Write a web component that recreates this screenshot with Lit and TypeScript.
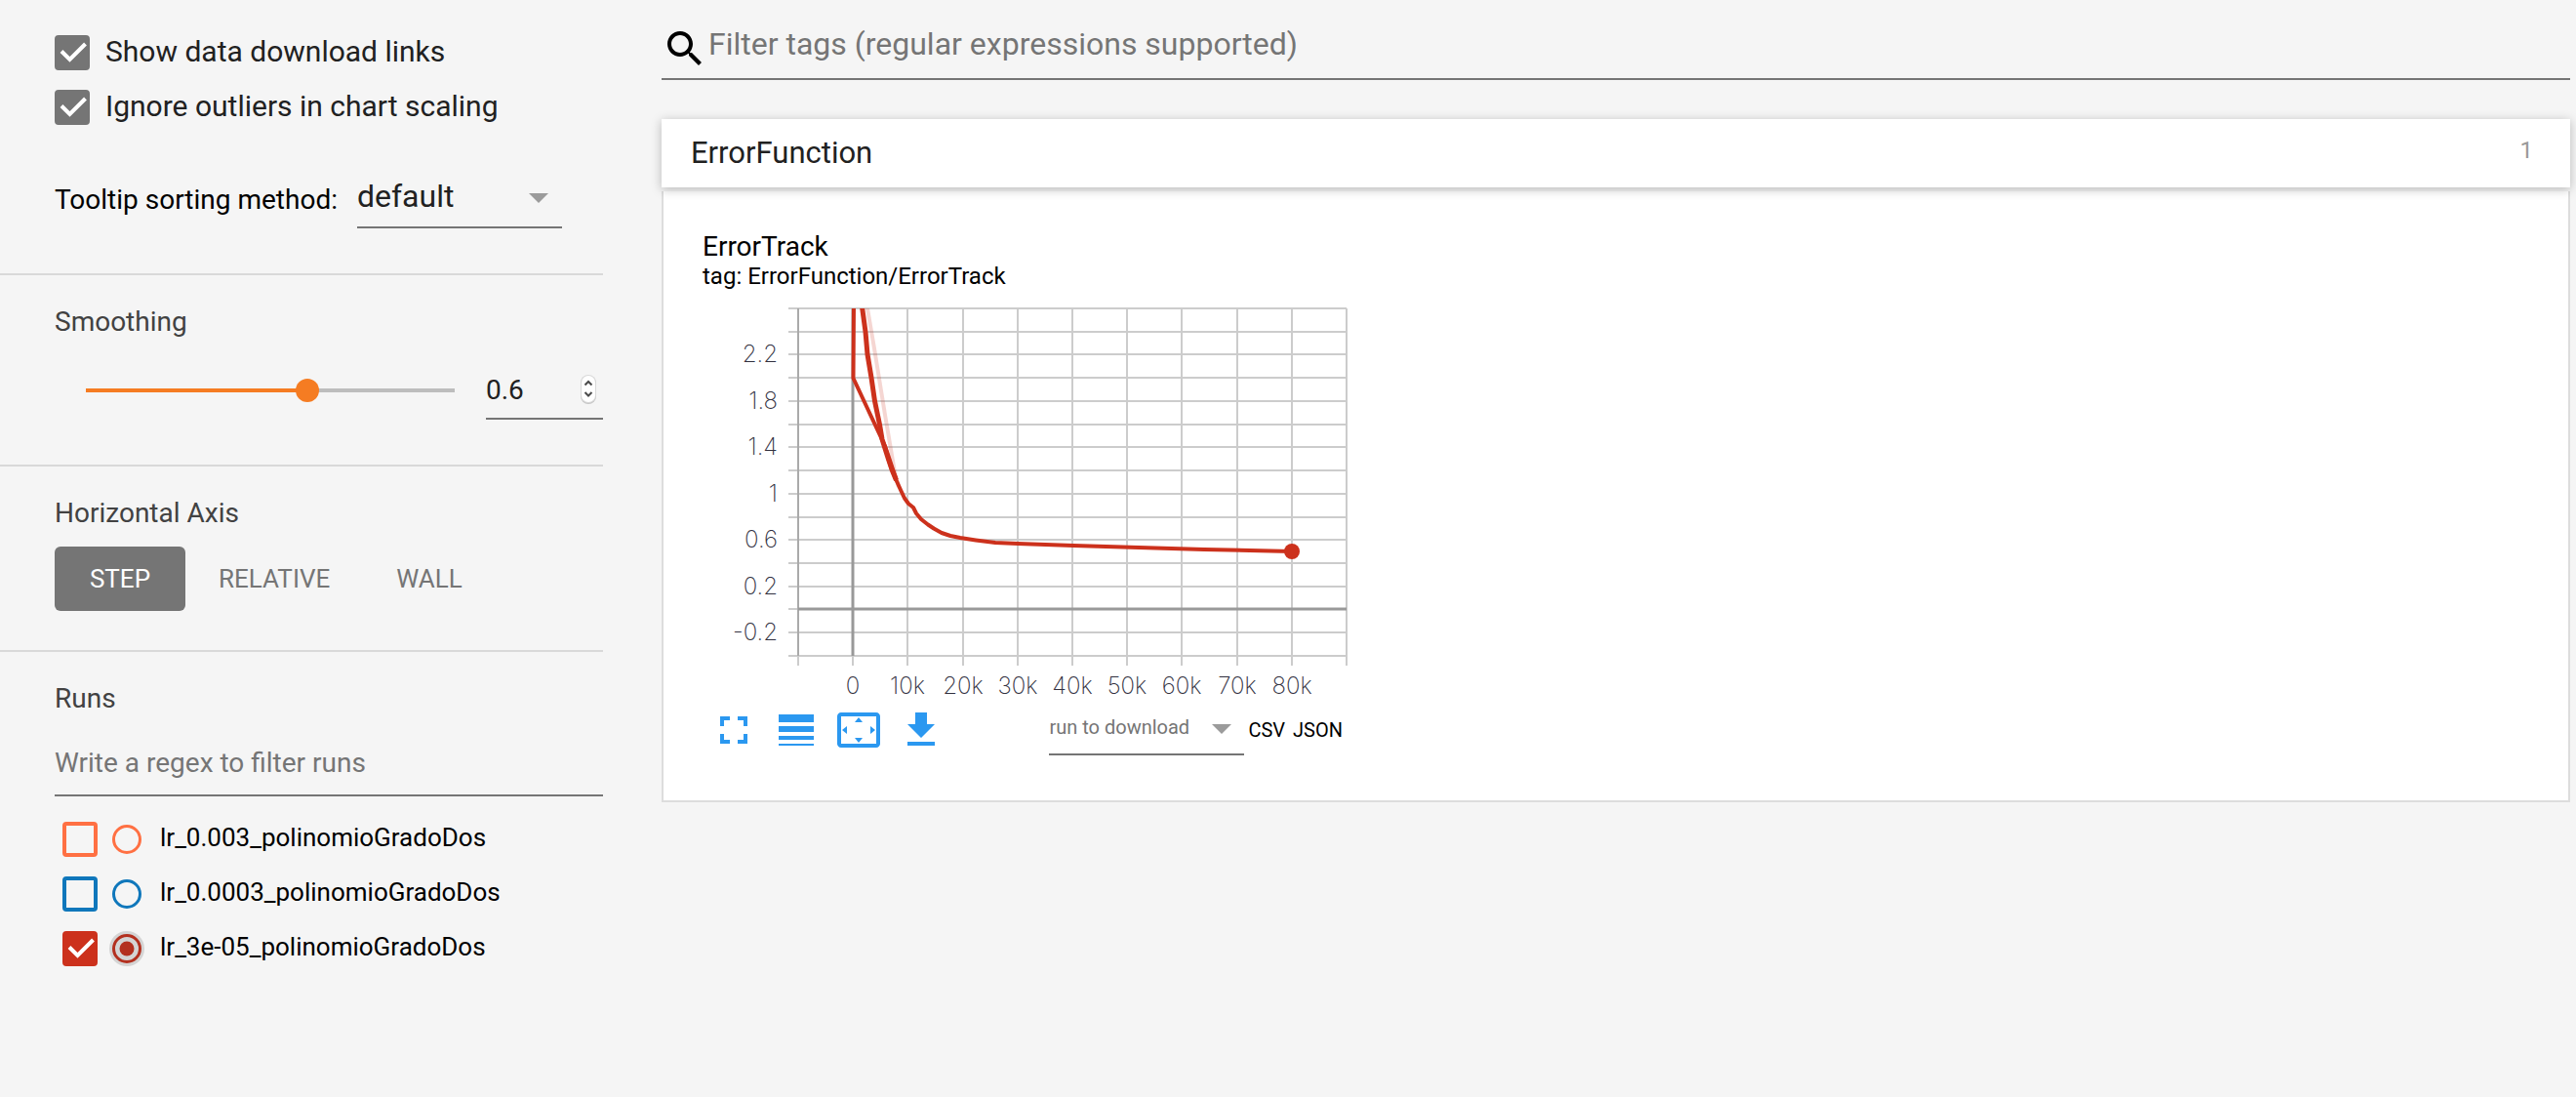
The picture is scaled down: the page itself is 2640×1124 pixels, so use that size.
import { LitElement, html, svg, css } from "lit";
import { customElement, property, state } from "lit/decorators.js";

interface Run {
  name: string;
  color: string;
  on: boolean;
}

const TEXT_RESET = css`
  * {
    box-sizing: border-box;
  }
  input,
  select,
  button {
    appearance: none;
    margin: 0;
    padding: 0;
    border: 0;
    border-radius: 0;
    background: none;
    outline: none;
    color: inherit;
    font: inherit;
  }
`;

@customElement("tick-box")
export class TickBox extends LitElement {
  @property() label = "";
  @property() color = "#757575";
  @property({ type: Boolean }) checked = false;

  static styles = [
    TEXT_RESET,
    css`
      :host {
        display: block;
        flex: none;
      }
      .box {
        position: relative;
        display: block;
        width: 36px;
        height: 36px;
      }
      input {
        display: block;
        width: 36px;
        height: 36px;
        border: 4px solid var(--tone);
        border-radius: 4px;
      }
      input:checked {
        background: var(--tone);
      }
      svg {
        position: absolute;
        inset: 0;
        pointer-events: none;
      }
    `,
  ];

  render() {
    return html`<span class="box" style="--tone:${this.color}">
      <input
        type="checkbox"
        aria-label=${this.label}
        .checked=${this.checked}
        @change=${(e: Event) => (this.checked = (e.target as HTMLInputElement).checked)}
      />
      ${this.checked
        ? html`<svg width="36" height="36" viewBox="0 0 36 36">
            <path d="M7 16.500L15.500 25L31.500 9" fill="none" stroke="#fff" stroke-width="4" />
          </svg>`
        : null}
    </span>`;
  }
}

@customElement("side-panel")
export class SidePanel extends LitElement {
  @state() private smoothing = 0.6;
  @state() private axis = "STEP";
  @state() private runs: Run[] = [
    { name: "lr_0.003_polinomioGradoDos", color: "#ff7043", on: false },
    { name: "lr_0.0003_polinomioGradoDos", color: "#0f77bb", on: false },
    { name: "lr_3e-05_polinomioGradoDos", color: "#cc311c", on: true },
  ];

  static styles = [
    TEXT_RESET,
    css`
      :host {
        display: block;
      }
      section {
        padding: 32px 0 0 56px;
        border-bottom: 2px solid #d9d9d9;
      }
      .general {
        padding-top: 36px;
        padding-bottom: 46px;
      }
      .smooth {
        padding-bottom: 46px;
      }
      .axis {
        padding-bottom: 40px;
      }
      .runs {
        border-bottom: 0;
      }
      h3 {
        margin: 0;
        font-size: 28px;
        font-weight: 400;
        line-height: 32px;
        color: #424242;
      }
      .check {
        display: flex;
        gap: 16px;
        height: 36px;
        margin-bottom: 20px;
        font-size: 30px;
        line-height: 34px;
        color: #212121;
      }
      .sorting {
        display: flex;
        align-items: center;
        gap: 20px;
        margin-top: 48px;
        font-size: 28px;
      }
      .sorting label {
        padding-bottom: 2px;
      }
      .drop {
        position: relative;
      }
      .drop select {
        display: block;
        width: 210px;
        height: 58px;
        padding-bottom: 6px;
        border-bottom: 2px solid #757575;
        font-size: 32px;
        color: #212121;
      }
      .drop svg {
        position: absolute;
        right: 14px;
        top: 22px;
        pointer-events: none;
      }
      .slide {
        display: flex;
        align-items: center;
        gap: 20px;
        margin-top: 24px;
        padding-left: 20px;
      }
      .slide input[type="range"] {
        flex: 1;
        min-width: 0;
        height: 24px;
        background:
          linear-gradient(#f57c22, #f57c22) 12px 50% / calc((100% - 24px) * var(--fill)) 4px no-repeat,
          linear-gradient(#bdbdbd, #bdbdbd) 12px 50% / calc(100% - 24px) 4px no-repeat;
      }
      input[type="range"]::-webkit-slider-thumb {
        appearance: none;
        width: 24px;
        height: 24px;
        border-radius: 50%;
        background: #f57c22;
      }
      .number {
        position: relative;
        width: 120px;
      }
      .number input {
        appearance: textfield;
        display: block;
        width: 100%;
        height: 60px;
        border-bottom: 2px solid #757575;
        font-size: 28px;
        color: #212121;
      }
      .number input::-webkit-inner-spin-button {
        display: none;
      }
      .number svg {
        position: absolute;
        right: 4px;
        top: 12px;
        pointer-events: none;
      }
      .modes {
        display: flex;
        margin-top: 18px;
      }
      .modes button {
        min-width: 134px;
        height: 66px;
        padding: 0 34px;
        border-radius: 6px;
        font-size: 26px;
        color: #757575;
      }
      .modes button.active {
        background: #757575;
        color: #fff;
      }
      .filter {
        display: block;
        width: 100%;
        height: 68px;
        margin-top: 16px;
        border-bottom: 2px solid #757575;
        font-size: 28px;
      }
      .filter::placeholder {
        color: #757575;
        opacity: 1;
      }
      ul {
        display: grid;
        gap: 20px;
        margin: 26px 0 0;
        padding: 0 0 0 8px;
        list-style: none;
      }
      li {
        display: flex;
        height: 36px;
      }
      .dot {
        position: relative;
        width: 36px;
        height: 36px;
        margin: 0 16px 0 12px;
      }
      .dot input {
        display: block;
        width: 36px;
        height: 36px;
        border-radius: 50%;
      }
      .dot svg {
        position: absolute;
        inset: 0;
        pointer-events: none;
      }
      .name {
        font-size: 26px;
        line-height: 32px;
      }
    `,
  ];

  render() {
    return html`
      <section class="general">
        <div class="check">
          <tick-box label="Show data download links" checked></tick-box>
          <span>Show data download links</span>
        </div>
        <div class="check">
          <tick-box label="Ignore outliers in chart scaling" checked></tick-box>
          <span>Ignore outliers in chart scaling</span>
        </div>
        <div class="sorting">
          <label for="sort">Tooltip sorting method:</label>
          <div class="drop">
            <select id="sort">
              <option>default</option>
            </select>
            <svg width="20" height="10" viewBox="0 0 20 10"><path d="M0 0H20L10 10Z" fill="#9b9b9b" /></svg>
          </div>
        </div>
      </section>
      <section class="smooth">
        <h3>Smoothing</h3>
        <div class="slide">
          <input
            type="range"
            aria-label="Smoothing"
            min="0"
            max="1"
            step="0.001"
            .value=${String(this.smoothing)}
            style="--fill:${this.smoothing}"
            @input=${(e: Event) => (this.smoothing = Number((e.target as HTMLInputElement).value))}
          />
          <div class="number">
            <input
              type="number"
              aria-label="Smoothing value"
              min="0"
              max="1"
              step="0.1"
              .value=${String(this.smoothing)}
              @input=${(e: Event) => (this.smoothing = Number((e.target as HTMLInputElement).value))}
            />
            <svg width="22" height="34" viewBox="0 0 22 34">
              <rect x="3" y="3" width="16" height="29" rx="8" fill="#c4c4c4" />
              <rect x="3" y="2" width="16" height="29" rx="8" fill="#d9d9d9" />
              <rect x="4" y="3" width="14" height="27" rx="7" fill="#fff" />
              <path d="M7.500 12.500L11 9L14.500 12.500M7.500 20L11 23.500L14.500 20" fill="none" stroke="#4a4a4a" stroke-width="2" />
            </svg>
          </div>
        </div>
      </section>
      <section class="axis">
        <h3>Horizontal Axis</h3>
        <div class="modes">
          ${["STEP", "RELATIVE", "WALL"].map(
            (m) => html`<button class=${m === this.axis ? "active" : ""} @click=${() => (this.axis = m)}>${m}</button>`,
          )}
        </div>
      </section>
      <section class="runs">
        <h3>Runs</h3>
        <input class="filter" type="text" aria-label="Filter runs" placeholder="Write a regex to filter runs" />
        <ul>
          ${this.runs.map(
            (r) => html`<li>
              <tick-box label=${r.name} .color=${r.color} .checked=${r.on}></tick-box>
              <span class="dot">
                <input type="radio" name="only" aria-label="Only ${r.name}" .checked=${r.on} />
                <svg width="36" height="36" viewBox="0 0 36 36">
                  ${r.on
                    ? svg`<circle cx="18" cy="18" r="18" fill="#d4d4d4" />
                        <circle cx="18" cy="18" r="13.500" fill="none" stroke="#b3301f" stroke-width="3" />
                        <circle cx="18" cy="18" r="7.500" fill="#b3301f" />`
                    : svg`<circle cx="18" cy="18" r="13.500" fill="none" stroke=${r.color} stroke-width="3" />`}
                </svg>
              </span>
              <span class="name">${r.name}</span>
            </li>`,
          )}
        </ul>
      </section>
    `;
  }
}

const X0 = 98;
const X_STEP = 56.2;
const Y0 = 16;
const Y_STEP = 23.73;
const COLS = Array.from({ length: 11 }, (_, i) => Math.round(X0 + i * X_STEP));
const ROWS = Array.from({ length: 16 }, (_, i) => Math.round(Y0 + i * Y_STEP));
const RIGHT = COLS[10];
const BOTTOM = ROWS[15];
const Y_LABELS = ["2.2", "1.8", "1.4", "1", "0.6", "0.2", "-0.2"];
const X_LABELS = ["0", "10k", "20k", "30k", "40k", "50k", "60k", "70k", "80k"];

@customElement("scalar-chart")
export class ScalarChart extends LitElement {
  static styles = css`
    :host {
      display: block;
    }
    svg {
      display: block;
    }
    .grid {
      fill: none;
      stroke: #000;
      stroke-opacity: 0.2;
      stroke-width: 2;
    }
    .edge {
      fill: none;
      stroke: #aaa;
      stroke-width: 2;
    }
    .zero {
      fill: none;
      stroke: #999;
      stroke-width: 3;
    }
    text {
      font-family: Inter, "Liberation Sans", sans-serif;
      font-size: 24px;
      font-weight: 200;
      fill: #32313f;
    }
    .y {
      text-anchor: end;
    }
    .x {
      text-anchor: middle;
    }
    .line {
      fill: none;
      stroke: #cc311c;
      stroke-width: 4;
      stroke-linejoin: round;
    }
    .steep {
      stroke-width: 5;
    }
    .raw {
      opacity: 0.2;
    }
  `;

  render() {
    const grid =
      ROWS.map((y) => `M${X0 - 10} ${y}H${RIGHT}`).join("") + COLS.map((x) => `M${x} ${Y0}V${BOTTOM + 10}`).join("");
    return html`<svg width="670" height="420" viewBox="0 0 670 420" role="img" aria-label="ErrorTrack">
      <clipPath id="plot"><rect x=${X0} y=${Y0} width="580" height="356" /></clipPath>
      <path class="grid" d=${grid} />
      <path class="edge" d="M${X0} ${Y0}V${BOTTOM}" />
      <path class="zero" d="M${COLS[1]} ${Y0}V${BOTTOM}M${X0} ${ROWS[13]}H${RIGHT}" />
      ${Y_LABELS.map((t, i) => svg`<text class="y" x="77" y=${ROWS[2 + i * 2] + 8}>${t}</text>`)}
      ${X_LABELS.map((t, i) => svg`<text class="x" x=${COLS[1 + i]} y="411">${t}</text>`)}
      <g clip-path="url(#plot)">
        <path class="line raw" d="M168 10L169 16L176 57L187 125L197 184L201 199" />
        <path class="line" d="M155 10L154.500 87.500L187 157L198 190" />
        <path
          class="line steep"
          d="M163 8L163.700 16L167 40L169 63L173 87L176.500 111L181.500 135L184 150L190 169L194 181L198.500 192"
        />
        <path
          class="line"
          d="M190 169L194 181L198.500 192L203 202L207 210.500L211 216L216 220L219 226L224 232L231 237.500L237 241.500L245 246L254 249L264 251L280 253.400L300 256L323 257L380 259L447 261L514 263L604 265"
        />
      </g>
      <circle cx="604" cy="265" r="8" fill="#cc311c" />
    </svg>`;
  }
}

@customElement("chart-board")
export class ChartBoard extends LitElement {
  static styles = [
    TEXT_RESET,
    css`
      :host {
        display: block;
      }
      .search {
        display: flex;
        align-items: center;
        height: 82px;
        padding-top: 20px;
        border-bottom: 2px solid #757575;
      }
      .search svg {
        flex: none;
      }
      .search input {
        flex: 1;
        height: 50px;
        padding-bottom: 10px;
        font-size: 32px;
      }
      .search input::placeholder {
        color: #757575;
        opacity: 1;
      }
      .head {
        position: relative;
        z-index: 1;
        display: flex;
        justify-content: space-between;
        width: 100%;
        height: 70px;
        margin-top: 40px;
        padding: 0 38px 0 30px;
        background: #fff;
        box-shadow: 0 2px 10px rgba(0, 0, 0, 0.25);
        font-size: 31px;
        line-height: 70px;
        color: #212121;
      }
      .count {
        font-size: 24px;
        line-height: 64px;
        color: #999;
      }
      .card {
        margin-top: 4px;
        padding: 40px 40px 44px;
        border: 2px solid #ddd;
        border-top: 0;
        background: #fff;
      }
      h2 {
        margin: 0;
        font-size: 28px;
        font-weight: 400;
        line-height: 34px;
      }
      p {
        margin: 0 0 4px;
        font-size: 24px;
        line-height: 26px;
      }
      .tools {
        display: flex;
        align-items: center;
        width: 660px;
        max-width: 100%;
        height: 56px;
      }
      .tools button {
        display: grid;
        place-items: center;
        width: 64px;
        height: 56px;
        color: #2b98f0;
      }
      .pick {
        position: relative;
        margin: 0 4px 0 auto;
      }
      .pick select {
        display: block;
        width: 200px;
        height: 52px;
        padding-bottom: 4px;
        border-bottom: 2px solid #757575;
        font-size: 20px;
        color: #757575;
      }
      .pick svg {
        position: absolute;
        right: 13px;
        top: 20px;
        pointer-events: none;
      }
      a {
        margin-right: 8px;
        font-size: 20px;
        color: #000;
        text-decoration: none;
      }
      a:last-child {
        margin-right: 4px;
      }
    `,
  ];

  render() {
    return html`
      <div class="search">
        <svg width="48" height="48" viewBox="0 0 24 24">
          <path
            d="M15.500 14h-.79l-.28-.27C15.410 12.590 16 11.110 16 9.500 16 5.910 13.090 3 9.500 3S3 5.910 3 9.500 5.910 16 9.500 16c1.610 0 3.090-.59 4.230-1.570l.27.28v.79l5 4.990L20.490 19l-4.990-5zm-6 0C7.010 14 5 11.990 5 9.500S7.010 5 9.500 5 14 7.010 14 9.500 11.990 14 9.500 14z"
          />
        </svg>
        <input type="text" aria-label="Filter tags" placeholder="Filter tags (regular expressions supported)" />
      </div>
      <button class="head"><span>ErrorFunction</span><span class="count">1</span></button>
      <div class="card">
        <h2>ErrorTrack</h2>
        <p>tag: ErrorFunction/ErrorTrack</p>
        <scalar-chart></scalar-chart>
        <div class="tools">
          <button aria-label="Toggle full size">
            <svg width="48" height="48" viewBox="0 0 24 24" fill="currentColor">
              <path d="M7 14H5v5h5v-2H7v-3zm-2-4h2V7h3V5H5v5zm12 7h-3v2h5v-5h-2v3zM14 5v2h3v3h2V5h-5z" />
            </svg>
          </button>
          <button aria-label="Toggle log scale">
            <svg width="48" height="48" viewBox="0 0 24 24" fill="currentColor">
              <path d="M3 4h18v4H3zM3 10h18v3H3zM3 15h18v2H3zM3 19h18v1H3z" />
            </svg>
          </button>
          <button aria-label="Fit domain to data">
            <svg width="48" height="48" viewBox="0 0 24 24" fill="currentColor">
              <path
                d="M12 5.500L10 8h4l-2-2.500zm6 4.500v4l2.500-2L18 10zM6 10l-2.500 2L6 14v-4zm8 6h-4l2 2.500 2-2.500zm7-13H3c-1.100 0-2 .9-2 2v14c0 1.100.9 2 2 2h18c1.100 0 2-.9 2-2V5c0-1.100-.9-2-2-2zm0 16.010H3V4.990h18v14.020z"
              />
            </svg>
          </button>
          <button aria-label="Download chart">
            <svg width="48" height="48" viewBox="0 0 24 24" fill="currentColor">
              <path d="M19 9h-4V3H9v6H5l7 7 7-7zM5 18v2h14v-2H5z" />
            </svg>
          </button>
          <div class="pick">
            <select aria-label="run to download">
              <option>run to download</option>
            </select>
            <svg width="20" height="10" viewBox="0 0 20 10"><path d="M0 0H20L10 10Z" fill="#9b9b9b" /></svg>
          </div>
          <a href="#csv">CSV</a>
          <a href="#json">JSON</a>
        </div>
      </div>
    `;
  }
}

@customElement("app-root")
export class AppRoot extends LitElement {
  static styles = css`
    :host {
      display: block;
      min-height: 100vh;
      background: #f5f5f5;
      color: #000;
      font-family: Roboto, "Liberation Sans", sans-serif;
    }
    .page {
      display: grid;
      grid-template-columns: 618px minmax(0, 1fr);
      gap: 60px;
      padding-right: 6px;
    }
  `;

  render() {
    return html`<div class="page">
      <side-panel></side-panel>
      <chart-board></chart-board>
    </div>`;
  }
}
